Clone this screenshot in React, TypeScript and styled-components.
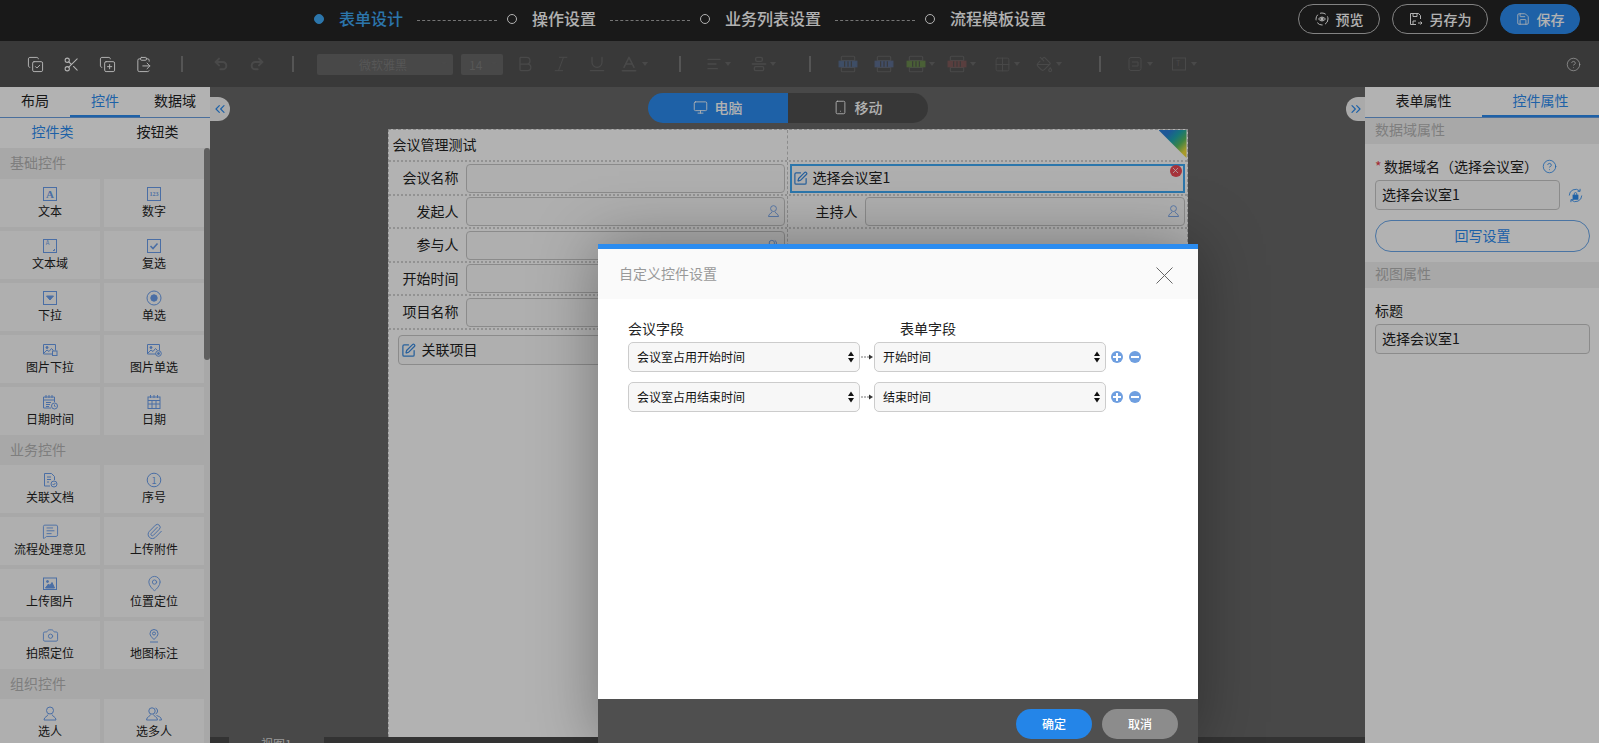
import React from 'react';
import styled, { createGlobalStyle } from 'styled-components';
import {
  AlignLeft, Baseline, Bold, Camera, CircleHelp, CopyCheck, CopyPlus, Grid2x2,
  ClipboardPaste, Italic, MapPin, MessageSquareText, Monitor, PaintBucket, Paperclip, Redo2, Save, Scissors,
  Smartphone, SquarePen, Undo2, Underline, X, ChevronsLeft, ChevronsRight,
  AlignVerticalJustifyCenter,
} from 'lucide-react';

const blue = '#2b8cf0';
const brightBlue = '#3fa9f5';
const font = '"Noto Sans CJK SC", "Noto Sans", sans-serif';

const GlobalStyle = createGlobalStyle`
  html, body { margin: 0; height: 100%; overflow: hidden; }
  body { font-family: ${font}; font-size: 14px; color: #222; }
  * { box-sizing: border-box; }
`;

const Page = styled.div`
  position: relative;
  display: flex;
  flex-direction: column;
  height: 100vh;
  overflow: hidden;
  background: #676767;
`;

const Dim = styled.div`
  position: absolute;
  inset: 0;
  background: rgba(0, 0, 0, 0.3);
`;

/* top bar */
const TopBar = styled.header`
  display: flex;
  align-items: center;
  flex: 0 0 41px;
  padding: 0 19px 3px 314px;
  background: #252525;
`;

const StepDot = styled.i<{ $active?: boolean }>`
  width: 10px;
  height: 10px;
  margin-right: 15px;
  border-radius: 50%;
  border: 1px solid ${p => (p.$active ? brightBlue : '#fff')};
  background: ${p => (p.$active ? brightBlue : 'transparent')};
`;

const StepName = styled.span<{ $active?: boolean }>`
  font-size: 16px;
  font-weight: 500;
  line-height: 20px;
  padding-bottom: 2px;
  color: ${p => (p.$active ? brightBlue : '#fff')};
`;

const StepLine = styled.i`
  width: 80px;
  margin: 2px 10px 0 14px;
  border-top: 1px dashed #a8a8a8;
`;

const TopActions = styled.div`
  display: flex;
  gap: 12px;
  margin-left: auto;
`;

const TopButton = styled.button<{ $primary?: boolean; $w: number }>`
  display: flex;
  align-items: center;
  justify-content: center;
  gap: 7px;
  width: ${p => p.$w}px;
  height: 30px;
  padding: 0 0 1px;
  border-radius: 15px;
  border: 1px solid ${p => (p.$primary ? blue : '#bbb')};
  background: ${p => (p.$primary ? blue : 'transparent')};
  color: #fff;
  font: 500 14px ${font};
`;

/* toolbar */
const ToolBar = styled.div`
  display: flex;
  align-items: center;
  flex: 0 0 46px;
  padding: 0 18px 0 17px;
  background: #525252;
`;

const Tool = styled.span<{ $on?: boolean; $w?: number; $ml?: number }>`
  display: flex;
  align-items: center;
  justify-content: center;
  gap: 3px;
  flex: 0 0 ${p => p.$w ?? 36}px;
  margin-left: ${p => p.$ml ?? 0}px;
  color: ${p => (p.$on ? '#fff' : '#696969')};
`;

const Caret = styled.i`
  border: 3px solid transparent;
  border-top: 4px solid #696969;
  border-bottom: 0;
`;

const ToolSep = styled.i<{ $ml: number; $mr: number }>`
  flex: 0 0 2px;
  height: 16px;
  margin: 0 ${p => p.$mr}px 0 ${p => p.$ml}px;
  background: #7a7a7a;
`;

const FontBox = styled.span<{ $w: number; $ml: number }>`
  display: flex;
  align-items: center;
  justify-content: space-between;
  width: ${p => p.$w}px;
  height: 21px;
  margin-left: ${p => p.$ml}px;
  padding: 0 6px 0 8px;
  border-radius: 2px;
  background: #676767;
  color: #7d7d7d;
  font-size: 12px;
`;

const FontName = styled.span<{ $left?: boolean }>`
  flex: 1;
  text-align: ${p => (p.$left ? 'left' : 'center')};
`;

const HelpTool = styled.span`
  display: flex;
  margin-left: auto;
  color: #dcdcdc;
`;

/* workspace */
const Workspace = styled.div`
  display: flex;
  flex: 1;
  min-height: 0;
`;

const SidePanel = styled.aside<{ $w: number }>`
  position: relative;
  display: flex;
  flex-direction: column;
  flex: 0 0 ${p => p.$w}px;
  background: #fff;
`;

const PanelTabs = styled.div`
  display: flex;
  flex: 0 0 31px;
  border-bottom: 1px solid #6a9fe0;
`;

const PanelTab = styled.span<{ $active?: boolean }>`
  flex: 1;
  line-height: 27px;
  text-align: center;
  color: ${p => (p.$active ? blue : '#222')};
  border-bottom: 2px solid ${p => (p.$active ? blue : 'transparent')};
`;

const SubTabs = styled.div`
  display: flex;
  flex: 0 0 30px;
`;

const SubTab = styled.span<{ $active?: boolean }>`
  flex: 1;
  line-height: 27px;
  text-align: center;
  color: ${p => (p.$active ? blue : '#222')};
`;

const Palette = styled.div`
  position: relative;
  flex: 1;
  overflow: hidden;
  background: #f1f1f1;
`;

const ScrollThumb = styled.i`
  position: absolute;
  top: 0;
  right: 0;
  width: 6px;
  height: 212px;
  border-radius: 3px;
  background: #888;
`;

const SectionTitle = styled.div<{ $h: number }>`
  height: ${p => p.$h}px;
  padding-left: 10px;
  line-height: ${p => p.$h - 2}px;
  background: #f1f1f1;
  color: #b5b5b5;
`;

const PaletteGrid = styled.div`
  display: grid;
  grid-template-columns: 100px 100px;
  grid-auto-rows: 48px;
  gap: 4px;
`;

const PaletteItem = styled.div`
  display: flex;
  flex-direction: column;
  align-items: center;
  padding-top: 6px;
  background: #fbfbfb;
  color: #6a9eec;
`;

const PaletteIcon = styled.span`
  display: flex;
  height: 18px;
`;

const PaletteName = styled.span`
  font-size: 12px;
  line-height: 16px;
  color: #222;
`;

const CollapseTab = styled.span<{ $side: 'left' | 'right' }>`
  position: absolute;
  top: 10px;
  ${p => (p.$side === 'left' ? 'left: 100%;' : 'right: 100%;')}
  display: flex;
  align-items: center;
  justify-content: center;
  width: ${p => (p.$side === 'left' ? 20 : 19)}px;
  height: 24px;
  border-radius: ${p => (p.$side === 'left' ? '0 12px 12px 0' : '12px 0 0 12px')};
  background: #f4f4f4;
  color: ${blue};
`;

/* center */
const Center = styled.main`
  display: flex;
  flex: 1;
  flex-direction: column;
  align-items: center;
  min-width: 0;
  padding-top: 6px;
`;

const DeviceSwitch = styled.div`
  display: flex;
  flex: 0 0 30px;
  width: 280px;
  margin-bottom: 6px;
  border-radius: 15px;
  overflow: hidden;
`;

const DeviceOption = styled.span<{ $active?: boolean }>`
  display: flex;
  flex: 1;
  align-items: center;
  justify-content: center;
  gap: 7px;
  padding-bottom: 2px;
  font-weight: 500;
  color: #fff;
  background: ${p => (p.$active ? blue : '#505050')};
`;

const Canvas = styled.section`
  position: relative;
  flex: 1;
  width: 800px;
  background: #fff;
  border-left: 1px dashed #c8c8c8;
  border-right: 1px dashed #c8c8c8;
  border-top: 1px dashed #c8c8c8;
`;

const CornerMark = styled.i`
  position: absolute;
  top: 0;
  right: 0;
  width: 28px;
  height: 28px;
  clip-path: polygon(0 0, 100% 0, 100% 100%);
  background: linear-gradient(135deg, #2a7fd8 22%, #1fa8b0 42%, #58bd62 62%, #f2dd3c 84%);
`;

const FormRow = styled.div<{ $h: number }>`
  display: grid;
  grid-template-columns: 398px 1fr;
  height: ${p => p.$h}px;
  border-bottom: 2px dotted #d2d2d2;
`;

const FormCell = styled.div`
  display: flex;
  align-items: center;
  min-width: 0;
  padding-right: 2px;
  & + & {
    border-left: 1px dashed #c8c8c8;
  }
`;

const FormTitle = styled.span`
  padding: 0 0 2px 4px;
`;

const FormLabel = styled.label`
  flex: 0 0 70px;
  margin-right: 7px;
  padding-bottom: 2px;
  text-align: right;
`;

const FormInput = styled.div`
  display: flex;
  align-items: center;
  justify-content: flex-end;
  flex: 1;
  height: 29px;
  padding-right: 3px;
  border: 1px solid #c8c8c8;
  border-radius: 4px;
  background: #fbfbfb;
  color: #6a9eec;
`;

const ChosenField = styled.div`
  position: relative;
  display: flex;
  align-items: center;
  gap: 5px;
  flex: 1;
  height: 29px;
  margin-left: 2px;
  padding-left: 1px;
  border: 2px solid ${brightBlue};
  background: #fbfbfb;
  color: #3a8be0;
`;

const FieldText = styled.span`
  padding-bottom: 2px;
  color: #222;
`;

const RemoveBadge = styled.span`
  position: absolute;
  top: -1px;
  right: 1px;
  display: flex;
  align-items: center;
  justify-content: center;
  width: 12px;
  height: 12px;
  border-radius: 50%;
  background: #ee4a55;
  color: #fff;
`;

const LinkField = styled.div`
  display: flex;
  align-items: center;
  gap: 6px;
  width: 380px;
  height: 30px;
  margin: 5px 0 0 9px;
  padding-left: 2px;
  border: 1px solid #c8c8c8;
  border-radius: 4px;
  background: #fbfbfb;
  color: #3a8be0;
`;

const BottomBar = styled.div`
  display: flex;
  flex: 0 0 6px;
  align-self: stretch;
  padding-left: 19px;
  overflow: hidden;
  background: #4a4a4a;
`;

const ViewTab = styled.span`
  width: 95px;
  height: 6px;
  padding-left: 32px;
  background: #676767;
  color: #ddd;
  font-size: 12px;
  line-height: 14px;
`;

/* right panel */
const PropTitle = styled.div`
  height: 26px;
  padding-left: 10px;
  line-height: 23px;
  background: #f1f1f1;
  color: #b5b5b5;
`;

const PropBody = styled.div`
  display: flex;
  flex-direction: column;
  align-items: flex-start;
  padding: 13px 9px 10px 10px;
`;

const PropLabel = styled.div`
  display: flex;
  align-items: center;
  height: 20px;
  margin-bottom: 3px;
  padding-bottom: 2px;
  color: #222;
`;

const Required = styled.span`
  width: 9px;
  color: #e8414c;
`;

const HelpMark = styled.span`
  display: flex;
  margin-left: 4px;
  color: ${blue};
`;

const PropRow = styled.div`
  display: flex;
  align-items: center;
  width: 100%;
`;

const PropInput = styled.div<{ $w: number }>`
  width: ${p => p.$w}px;
  height: 30px;
  padding-left: 6px;
  line-height: 26px;
  border: 1px solid #c8c8c8;
  border-radius: 4px;
  background: #fbfbfb;
`;

const SyncIcon = styled.span`
  display: flex;
  margin-left: 8px;
  color: ${blue};
`;

const OutlineButton = styled.button`
  width: 215px;
  height: 32px;
  margin-top: 10px;
  padding: 0 0 2px;
  border: 1px solid #6aa7ea;
  border-radius: 16px;
  background: #fff;
  color: ${blue};
  font: 14px ${font};
`;

/* modal */
const Modal = styled.div`
  position: absolute;
  top: 244px;
  left: 598px;
  display: flex;
  flex-direction: column;
  width: 600px;
  height: 499px;
  border-top: 5px solid ${blue};
  background: #fff;
  box-shadow: 0 0 60px rgba(0, 0, 0, 0.35);
`;

const ModalHead = styled.div`
  display: flex;
  align-items: center;
  justify-content: space-between;
  flex: 0 0 50px;
  padding: 0 25px 2px 21px;
  background: #fafafa;
  color: #999;
`;

const CloseMark = styled.svg`
  margin-top: 4px;
  stroke: #666;
`;

const ModalBody = styled.div`
  flex: 1;
  padding: 20px 30px 0;
`;

const FieldHeads = styled.div`
  display: flex;
  height: 23px;
  line-height: 18px;
`;

const FieldHead = styled.span`
  width: 272px;
  & + & {
    padding-left: 2px;
  }
`;

const MapRow = styled.div`
  display: flex;
  align-items: center;
  height: 30px;
  margin-bottom: 10px;
`;

const FakeSelect = styled.div`
  display: flex;
  align-items: center;
  justify-content: space-between;
  width: 232px;
  height: 30px;
  padding: 0 5px 0 8px;
  border: 1px solid #ccc;
  border-radius: 5px;
  background: #f7f7f7;
  color: #111;
  font-size: 12px;
`;

const SelectText = styled.span`
  padding-bottom: 2px;
`;

const MapArrow = styled.svg`
  flex: 0 0 14px;
`;

const RoundAction = styled.span<{ $ml: number }>`
  display: flex;
  align-items: center;
  justify-content: center;
  width: 12px;
  height: 12px;
  margin-left: ${p => p.$ml}px;
  border-radius: 50%;
  background: #6f9fe0;
`;

const RoundBar = styled.i<{ $plus?: boolean }>`
  position: relative;
  width: 8px;
  height: 2px;
  background: #fff;
  ${p => p.$plus && `
    &::after {
      content: '';
      position: absolute;
      left: 3px;
      top: -3px;
      width: 2px;
      height: 8px;
      background: #fff;
    }
  `}
`;

const ModalFoot = styled.div`
  display: flex;
  justify-content: flex-end;
  gap: 10px;
  flex: 0 0 44px;
  padding: 10px 20px 0 0;
  background: #4f4f4f;
`;

const ModalButton = styled.button<{ $primary?: boolean }>`
  width: 76px;
  height: 30px;
  padding: 0 0 2px;
  border: 0;
  border-radius: 15px;
  background: ${p => (p.$primary ? '#2485e8' : '#8c8c8c')};
  color: #fff;
  font: 500 12px ${font};
`;

const Glyph = ({ children, size = 18 }: { children: React.ReactNode; size?: number }) => (
  <svg width={size} height={size} viewBox="0 0 18 18" fill="none" stroke="currentColor" strokeWidth="1">
    {children}
  </svg>
);

const boxLetter = (label: string, fontSize: number, y: number) => (
  <Glyph>
    <rect x="2.500" y="2.500" width="13" height="13" />
    <text x="9" y={y} fontSize={fontSize} fill="currentColor" stroke="none" textAnchor="middle" fontFamily="Liberation Serif, serif" fontWeight="700">{label}</text>
  </Glyph>
);

const ImageBase = ({ extra }: { extra: React.ReactNode }) => (
  <Glyph>
    <path d="M11 13H2.500V3.500h12v6" />
    <circle cx="6" cy="6.500" r="1" fill="currentColor" />
    <path d="M3 12l3-3 2 1.500 2.500-3 2 2" />
    {extra}
  </Glyph>
);

const PersonIcon = ({ size = 18 }: { size?: number }) => (
  <Glyph size={size}>
    <circle cx="9" cy="5.500" r="3.500" />
    <path d="M7 9.500C7 11.500 3 11.500 3 15h12c0-3.500-4-3.500-4-5.500" />
  </Glyph>
);

const PeopleIcon = ({ size = 18 }: { size?: number }) => (
  <Glyph size={size}>
    <circle cx="7" cy="6" r="3.200" />
    <path d="M5.500 9.500C5.500 11.500 1.500 11.500 1.500 15h11c0-3.500-4-3.500-4-5.500" />
    <path d="M10.500 3a3.200 3.200 0 010 6M11.500 10.500c2 .8 5 1.500 5 4.500h-2.500" />
  </Glyph>
);

const palette: { title: string; h: number; items: [string, React.ReactNode][] }[] = [
  {
    title: '基础控件',
    h: 31,
    items: [
      ['文本', boxLetter('A', 11, 13)],
      ['数字', boxLetter('123', 6, 11)],
      ['文本域', <Glyph><rect x="2.500" y="2.500" width="13" height="13" /><text x="6.500" y="8" fontSize="6" fill="currentColor" stroke="none" textAnchor="middle">A</text><path d="M12 13.500h1.500V12" /></Glyph>],
      ['复选', <Glyph><rect x="2.500" y="2.500" width="13" height="13" /><path d="M5.500 9l2.500 2.500 4.500-5" strokeWidth="1.600" /></Glyph>],
      ['下拉', <Glyph><rect x="2.500" y="2.500" width="13" height="13" /><path d="M5.500 7h7l-3.500 4z" fill="currentColor" /></Glyph>],
      ['单选', <Glyph><circle cx="9" cy="9" r="7" /><circle cx="9" cy="9" r="3.200" fill="currentColor" /></Glyph>],
      ['图片下拉', <ImageBase extra={<rect x="11.500" y="10" width="4.500" height="4.500" />} />],
      ['图片单选', <ImageBase extra={<><circle cx="13.500" cy="12.500" r="2.800" /><circle cx="13.500" cy="12.500" r="1" fill="currentColor" /></>} />],
      ['日期时间', <Glyph><path d="M10 15H2.500V4h11v5" /><path d="M5 2v3M8 2v3M11 2v3M3 7h10M5 9.500h5M5 11.500h4M5 13.500h3" /><circle cx="13.500" cy="13" r="3" /><path d="M13.500 11.500V13l1 1" /></Glyph>],
      ['日期', <Glyph><rect x="3" y="4" width="12" height="11.500" /><path d="M5.500 2v3M9 2v3M12.500 2v3M3 7.500h12M3 11h12M7 7.500v8M11 7.500v8" /></Glyph>],
    ],
  },
  {
    title: '业务控件',
    h: 30,
    items: [
      ['关联文档', <Glyph><path d="M9 15H3.500V2.500h7l3 3V9" /><path d="M6 6h4M6 8.500h4M6 11h2" /><circle cx="13" cy="13" r="3" /><path d="M11.600 13l1 1 1.800-2" /></Glyph>],
      ['序号', <Glyph><circle cx="9" cy="9" r="6.800" /><text x="9" y="12.500" fontSize="9" fill="currentColor" stroke="none" textAnchor="middle">1</text></Glyph>],
      ['流程处理意见', <MessageSquareText size={17} strokeWidth={1.300} />],
      ['上传附件', <Paperclip size={17} strokeWidth={1.400} />],
      ['上传图片', <Glyph><rect x="2.500" y="3" width="13" height="11.500" /><path d="M4.500 13l3-4 1.500 1.500 2-3 2.500 5.500z" fill="currentColor" /><circle cx="6.500" cy="6.500" r="1" fill="currentColor" /></Glyph>],
      ['位置定位', <MapPin size={17} strokeWidth={1.300} />],
      ['拍照定位', <Camera size={17} strokeWidth={1.300} />],
      ['地图标注', <Glyph><path d="M9 12.500C6.500 10 5 8.500 5 6.500a4 4 0 018 0c0 2-1.500 3.500-4 6z" /><circle cx="9" cy="6.500" r="1.500" /><path d="M5 15h8" /></Glyph>],
    ],
  },
  {
    title: '组织控件',
    h: 30,
    items: [
      ['选人', <PersonIcon />],
      ['选多人', <PeopleIcon />],
    ],
  },
];

const TableTool = ({ accent }: { accent: string }) => (
  <Glyph size={20}>
    <rect x="3" y="2" width="12" height="14" rx="1" />
    <path d="M3 6h12M3 12h12" />
    <rect x="1" y="6.500" width="16" height="5" fill={accent} stroke={accent} />
    <path d="M6 6.500v5M9 6.500v5M12 6.500v5" stroke="#525252" />
  </Glyph>
);

const UpDown = () => (
  <svg width="6" height="12" viewBox="0 0 6 12">
    <path d="M3 .5l3 4.500H0zM3 11.500L0 7h6z" fill="#111" />
  </svg>
);

const Arrow = () => (
  <MapArrow width="14" height="8" viewBox="0 0 14 8">
    <path d="M1 4h8" stroke="#777" strokeDasharray="2 1" />
    <path d="M9 1.500l4 2.500-4 2.500z" fill="#333" />
  </MapArrow>
);

const PreviewIcon = () => (
  <svg width="14" height="14" viewBox="0 0 14 14" fill="none" stroke="currentColor">
    <circle cx="7" cy="7" r="6" strokeDasharray="6 2.500" />
    <path d="M3.500 7C5.500 4.500 8.500 4.500 10.500 7 8.500 9.500 5.500 9.500 3.500 7z" />
    <circle cx="7" cy="7" r="1.200" fill="currentColor" />
  </svg>
);

const SaveAsIcon = () => (
  <svg width="14" height="14" viewBox="0 0 14 14" fill="none" stroke="currentColor">
    <path d="M7 12.500H1.500v-11h8l2 2V7" />
    <path d="M4 1.500v3h4v-3M4 12V9h3" />
    <path d="M9 11h4M11.500 9.500L13 11l-1.500 1.500" />
  </svg>
);

const LockSyncIcon = () => (
  <svg width="15" height="15" viewBox="0 0 18 18" fill="none" stroke="currentColor">
    <path d="M1.500 9A7.500 7.500 0 0114 3.500M16.500 9A7.500 7.500 0 014 14.500" />
    <path d="M14.500 1v3H11.500M3.500 17v-3H6.500" />
    <rect x="6" y="8.500" width="6" height="5" fill="currentColor" />
    <path d="M7.500 8.500V7a1.500 1.500 0 013 0v1.500" />
  </svg>
);

const Step = ({ name, active }: { name: string; active?: boolean }) => (
  <>
    <StepDot $active={active} />
    <StepName $active={active}>{name}</StepName>
  </>
);

const App = () => (
  <Page>
    <GlobalStyle />
    <TopBar>
      <Step name="表单设计" active />
      <StepLine />
      <Step name="操作设置" />
      <StepLine />
      <Step name="业务列表设置" />
      <StepLine />
      <Step name="流程模板设置" />
      <TopActions>
        <TopButton $w={82}><PreviewIcon />预览</TopButton>
        <TopButton $w={96}><SaveAsIcon />另存为</TopButton>
        <TopButton $w={80} $primary><Save size={14} strokeWidth={1.400} />保存</TopButton>
      </TopActions>
    </TopBar>

    <ToolBar>
      <Tool $on><CopyCheck size={17} strokeWidth={1.400} /></Tool>
      <Tool $on><Scissors size={17} strokeWidth={1.500} /></Tool>
      <Tool $on><CopyPlus size={17} strokeWidth={1.400} /></Tool>
      <Tool $on><ClipboardPaste size={17} strokeWidth={1.400} /></Tool>
      <ToolSep $ml={20} $mr={20} />
      <Tool><Undo2 size={16} strokeWidth={3} /></Tool>
      <Tool><Redo2 size={16} strokeWidth={3} /></Tool>
      <ToolSep $ml={17} $mr={0} />
      <FontBox $w={136} $ml={23}><FontName>微软雅黑</FontName><Caret /></FontBox>
      <FontBox $w={42} $ml={8}><FontName $left>14</FontName><Caret /></FontBox>
      <Tool $ml={4}><Bold size={20} strokeWidth={1.500} /></Tool>
      <Tool><Italic size={20} strokeWidth={1.200} /></Tool>
      <Tool><Underline size={20} strokeWidth={1.500} /></Tool>
      <Tool><Baseline size={20} strokeWidth={1.800} /><Caret /></Tool>
      <ToolSep $ml={28} $mr={19} />
      <Tool><AlignLeft size={16} strokeWidth={2} /><Caret /></Tool>
      <Tool $ml={9}><AlignVerticalJustifyCenter size={16} strokeWidth={2} /><Caret /></Tool>
      <ToolSep $ml={28} $mr={19} />
      <Tool><TableTool accent="#5a7092" /></Tool>
      <Tool><TableTool accent="#5e6f92" /></Tool>
      <Tool><TableTool accent="#6a8a4e" /><Caret /></Tool>
      <Tool $ml={5}><TableTool accent="#805a5a" /><Caret /></Tool>
      <Tool $ml={10}><Grid2x2 size={17} strokeWidth={1.300} /><Caret /></Tool>
      <Tool $ml={6}><PaintBucket size={17} strokeWidth={1.600} /><Caret /></Tool>
      <ToolSep $ml={32} $mr={20} />
      <Tool><Glyph><rect x="3" y="2.500" width="12" height="13" rx="2" /><path d="M6 7h6v4H6" /></Glyph><Caret /></Tool>
      <Tool $ml={8}><Glyph><rect x="2.500" y="3" width="13" height="12" /><text x="6" y="11" fontSize="7" fill="currentColor" stroke="none">T</text></Glyph><Caret /></Tool>
      <HelpTool><CircleHelp size={15} strokeWidth={1.200} /></HelpTool>
    </ToolBar>

    <Workspace>
      <SidePanel $w={210}>
        <CollapseTab $side="left"><ChevronsLeft size={16} strokeWidth={1.800} /></CollapseTab>
        <PanelTabs>
          <PanelTab>布局</PanelTab>
          <PanelTab $active>控件</PanelTab>
          <PanelTab>数据域</PanelTab>
        </PanelTabs>
        <SubTabs>
          <SubTab $active>控件类</SubTab>
          <SubTab>按钮类</SubTab>
        </SubTabs>
        <Palette>
          <ScrollThumb />
          {palette.map(group => (
            <React.Fragment key={group.title}>
              <SectionTitle $h={group.h}>{group.title}</SectionTitle>
              <PaletteGrid>
                {group.items.map(([name, icon]) => (
                  <PaletteItem key={name}>
                    <PaletteIcon>{icon}</PaletteIcon>
                    <PaletteName>{name}</PaletteName>
                  </PaletteItem>
                ))}
              </PaletteGrid>
            </React.Fragment>
          ))}
        </Palette>
      </SidePanel>

      <Center>
        <DeviceSwitch>
          <DeviceOption $active><Monitor size={15} strokeWidth={1.400} />电脑</DeviceOption>
          <DeviceOption><Smartphone size={15} strokeWidth={1.400} />移动</DeviceOption>
        </DeviceSwitch>
        <Canvas>
          <CornerMark />
          <FormRow $h={32}>
            <FormCell><FormTitle>会议管理测试</FormTitle></FormCell>
            <FormCell />
          </FormRow>
          <FormRow $h={34}>
            <FormCell><FormLabel>会议名称</FormLabel><FormInput /></FormCell>
            <FormCell>
              <ChosenField>
                <SquarePen size={15} strokeWidth={2} />
                <FieldText>选择会议室1</FieldText>
                <RemoveBadge><X size={9} strokeWidth={2} /></RemoveBadge>
              </ChosenField>
            </FormCell>
          </FormRow>
          <FormRow $h={33}>
            <FormCell><FormLabel>发起人</FormLabel><FormInput><PersonIcon size={15} /></FormInput></FormCell>
            <FormCell><FormLabel>主持人</FormLabel><FormInput><PersonIcon size={15} /></FormInput></FormCell>
          </FormRow>
          <FormRow $h={34}>
            <FormCell><FormLabel>参与人</FormLabel><FormInput><PeopleIcon size={15} /></FormInput></FormCell>
            <FormCell />
          </FormRow>
          <FormRow $h={33}>
            <FormCell><FormLabel>开始时间</FormLabel><FormInput /></FormCell>
            <FormCell />
          </FormRow>
          <FormRow $h={34}>
            <FormCell><FormLabel>项目名称</FormLabel><FormInput /></FormCell>
            <FormCell />
          </FormRow>
          <LinkField>
            <SquarePen size={15} strokeWidth={2} />
            <FieldText>关联项目</FieldText>
          </LinkField>
        </Canvas>
        <BottomBar><ViewTab>视图1</ViewTab></BottomBar>
      </Center>

      <SidePanel $w={234}>
        <CollapseTab $side="right"><ChevronsRight size={16} strokeWidth={1.800} /></CollapseTab>
        <PanelTabs>
          <PanelTab>表单属性</PanelTab>
          <PanelTab $active>控件属性</PanelTab>
        </PanelTabs>
        <PropTitle>数据域属性</PropTitle>
        <PropBody>
          <PropLabel>
            <Required>*</Required>数据域名（选择会议室）
            <HelpMark><CircleHelp size={15} strokeWidth={1.300} /></HelpMark>
          </PropLabel>
          <PropRow>
            <PropInput $w={185}>选择会议室1</PropInput>
            <SyncIcon><LockSyncIcon /></SyncIcon>
          </PropRow>
          <OutlineButton>回写设置</OutlineButton>
        </PropBody>
        <PropTitle>视图属性</PropTitle>
        <PropBody>
          <PropLabel>标题</PropLabel>
          <PropInput $w={215}>选择会议室1</PropInput>
        </PropBody>
      </SidePanel>
    </Workspace>

    <Dim />

    <Modal>
      <ModalHead>
        自定义控件设置
        <CloseMark width="17" height="17" viewBox="0 0 17 17"><path d="M.5.5l16 16M16.500.5l-16 16" /></CloseMark>
      </ModalHead>
      <ModalBody>
        <FieldHeads>
          <FieldHead>会议字段</FieldHead>
          <FieldHead>表单字段</FieldHead>
        </FieldHeads>
        <MapRow>
          <FakeSelect><SelectText>会议室占用开始时间</SelectText><UpDown /></FakeSelect>
          <Arrow />
          <FakeSelect><SelectText>开始时间</SelectText><UpDown /></FakeSelect>
          <RoundAction $ml={5}><RoundBar $plus /></RoundAction>
          <RoundAction $ml={6}><RoundBar /></RoundAction>
        </MapRow>
        <MapRow>
          <FakeSelect><SelectText>会议室占用结束时间</SelectText><UpDown /></FakeSelect>
          <Arrow />
          <FakeSelect><SelectText>结束时间</SelectText><UpDown /></FakeSelect>
          <RoundAction $ml={5}><RoundBar $plus /></RoundAction>
          <RoundAction $ml={6}><RoundBar /></RoundAction>
        </MapRow>
      </ModalBody>
      <ModalFoot>
        <ModalButton $primary>确定</ModalButton>
        <ModalButton>取消</ModalButton>
      </ModalFoot>
    </Modal>
  </Page>
);

export default App;
